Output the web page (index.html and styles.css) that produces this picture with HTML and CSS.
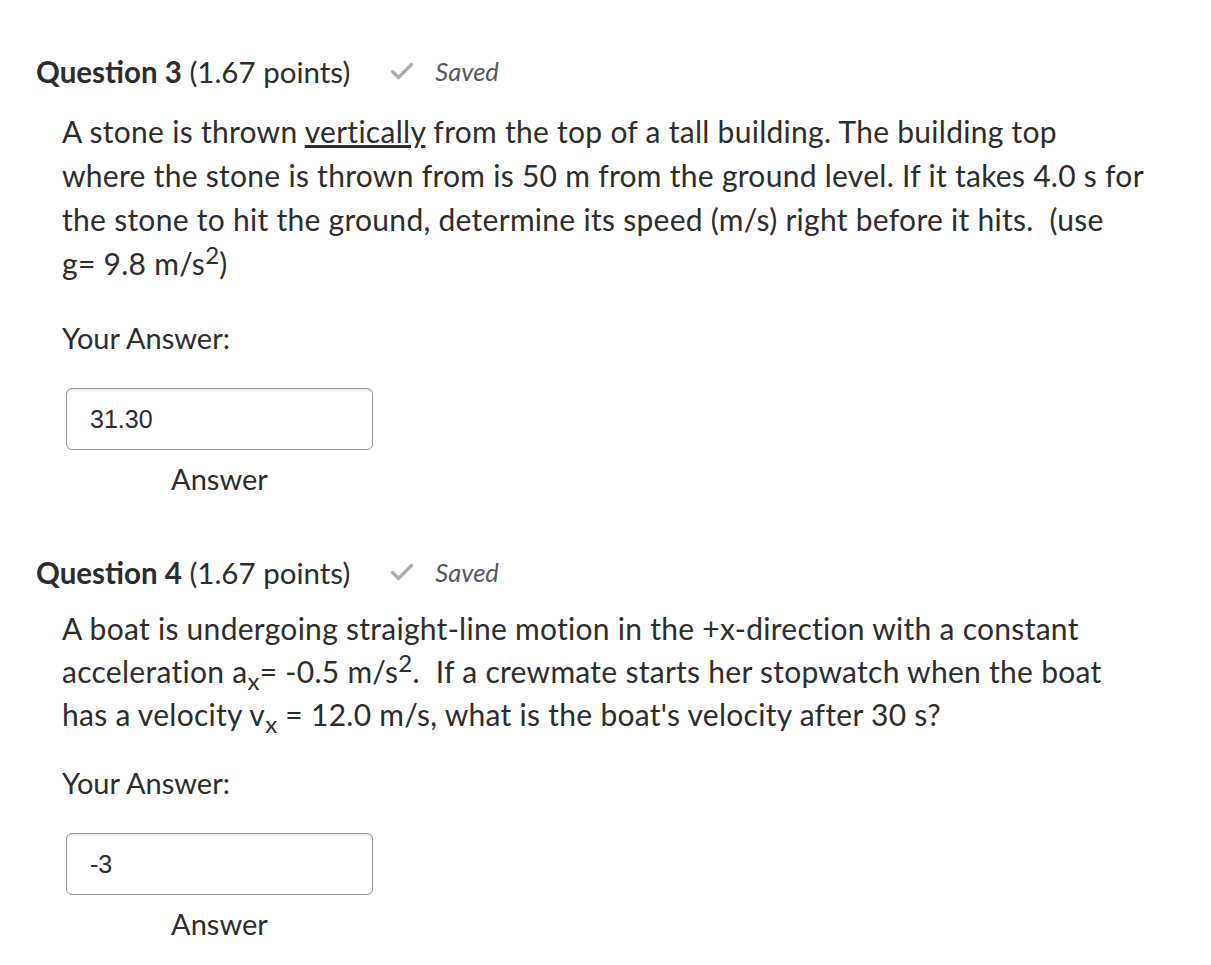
FILE: index.html
```html
<!DOCTYPE html>
<html>
<head>
<meta charset="utf-8">
<link rel="stylesheet" href="styles.css">
</head>
<body>
<div class="page">
  <section class="question q3">
    <div class="q-head">
      <span class="q-title"><b>Question 3</b> (1.67 points)</span>
      <span class="saved">
        <svg class="check" width="24" height="20" viewBox="0 0 24 20"><path d="M2.5 10.5 L8.5 16.5 L21.5 3.5" fill="none" stroke="#a9b0b5" stroke-width="3.4" stroke-linecap="round" stroke-linejoin="round"/></svg>
        <i>Saved</i>
      </span>
    </div>
    <div class="q-body">
      <p class="q-text">A stone is thrown <u>vertically</u> from the top of a tall building. The building top<br>where the stone is thrown from is 50 m from the ground level. If it takes 4.0 s for<br>the stone to hit the ground, determine its speed (m/s) right before it hits.&nbsp; (use<br>g= 9.8 m/s<sup>2</sup>)</p>
      <div class="your-answer">Your Answer:</div>
      <div class="answer-box">
        <div class="input">31.30</div>
        <div class="answer-label">Answer</div>
      </div>
    </div>
  </section>
  <section class="question q4">
    <div class="q-head">
      <span class="q-title"><b>Question 4</b> (1.67 points)</span>
      <span class="saved">
        <svg class="check" width="24" height="20" viewBox="0 0 24 20"><path d="M2.5 10.5 L8.5 16.5 L21.5 3.5" fill="none" stroke="#a9b0b5" stroke-width="3.4" stroke-linecap="round" stroke-linejoin="round"/></svg>
        <i>Saved</i>
      </span>
    </div>
    <div class="q-body">
      <p class="q-text">A boat is undergoing straight-line motion in the +x-direction with a constant<br>acceleration a<sub>x</sub>= -0.5 m/s<sup>2</sup>.&nbsp; If a crewmate starts her stopwatch when the boat<br>has a velocity v<sub>x</sub> = 12.0 m/s, what is the boat's velocity after 30 s?</p>
      <div class="your-answer">Your Answer:</div>
      <div class="answer-box">
        <div class="input">-3</div>
        <div class="answer-label">Answer</div>
      </div>
    </div>
  </section>
</div>
</body>
</html>
```
FILE: styles.css
```css
html, body {
  margin: 0;
  padding: 0;
  background: #ffffff;
}
body {
  font-family: Lato, "Noto Sans", sans-serif;
  color: #2d2d2d;
}
.page {
  padding: 51px 0 0 36px;
  width: 1150px;
}
.question {
  display: flex;
  flex-direction: column;
}
.q4 {
  margin-top: 51px;
}
.q-head {
  display: flex;
  align-items: center;
  height: 40px;
  font-size: 29.5px;
}
.q-title b {
  font-weight: 700;
}
.saved {
  display: flex;
  align-items: center;
  margin-left: 40px;
  color: #55595d;
  font-size: 25.5px;
}
.saved i {
  margin-left: 21px;
}
.q-body {
  padding-left: 26px;
}
.q-text {
  margin: 18px 0 0;
  font-size: 30px;
  letter-spacing: 0.28px;
  line-height: 44px;
  white-space: nowrap;
}
.q-text sup, .q-text sub {
  font-size: 0.8em;
  line-height: 0;
}
.q4 .q-text {
  margin-top: 15px;
  line-height: 43px;
}
.your-answer {
  margin-top: 31px;
  font-size: 29px;
  line-height: 44px;
}
.q4 .your-answer {
  margin-top: 25px;
}
.answer-box {
  margin: 28px 0 0 4px;
  width: 307px;
  display: flex;
  flex-direction: column;
}
.input {
  height: 60px;
  border: 1px solid #8e969b;
  border-radius: 6px;
  box-shadow: inset 0 2px 0 #eef0f1;
  padding: 0 23px;
  display: flex;
  align-items: center;
  font-family: "Liberation Sans", Arial, sans-serif;
  font-size: 25px;
  color: #2d2d2d;
}
.answer-label {
  text-align: center;
  font-size: 29px;
  line-height: 44px;
  margin-top: 7px;
}
```
